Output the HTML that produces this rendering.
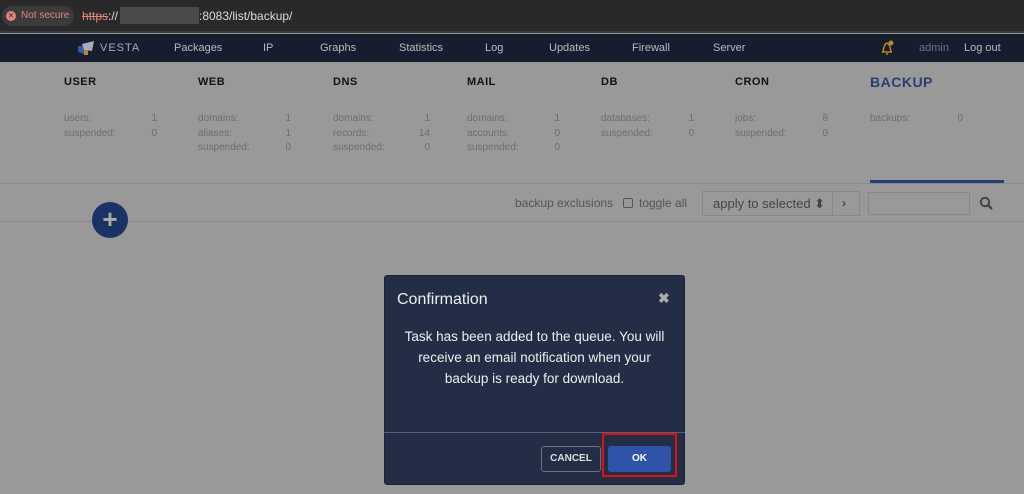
<!DOCTYPE html>
<html><head><style>
*{margin:0;padding:0;box-sizing:border-box}
body{width:1024px;height:494px;background:#999;font-family:"Liberation Sans",sans-serif;position:relative;overflow:hidden}
.abs{position:absolute;white-space:nowrap}
#chrome{left:0;top:0;width:1024px;height:33px;background:#292929;border-bottom:2px solid #3a3a3a}
#nav{left:0;top:34px;width:1024px;height:28px;background:#161d2c}
.nv{font-size:11px;color:#b8bcc4;top:42px;line-height:13px}
.h{font-size:11px;font-weight:bold;color:#111;top:76px;letter-spacing:.5px;line-height:13px}
.s{font-size:10px;color:#6e6e6e;line-height:14.5px}
.n{font-size:10px;color:#6e6e6e;line-height:14.5px;text-align:right}
</style></head><body>
<div id="chrome" class="abs"></div>
<div class="abs" style="left:2px;top:6px;width:72px;height:20px;border-radius:10px;background:#3b3b3b"></div>
<div class="abs" style="left:6px;top:11px;width:10px;height:10px;border-radius:5px;background:#e0857a;color:#3b3b3b;font-size:8px;line-height:10px;text-align:center;font-weight:bold">×</div>
<div class="abs" style="left:21px;top:10px;font-size:10px;line-height:12px;color:#e0857a">Not secure</div>
<div class="abs" style="left:82px;top:9px;font-size:12px;line-height:14px;color:#ddd"><span style="color:#e0857a;text-decoration:line-through">https</span>://</div>
<div class="abs" style="left:120px;top:7px;width:79px;height:17px;background:#4a4a4a"></div>
<div class="abs" style="left:199px;top:9px;font-size:12px;line-height:14px;color:#ddd">:8083/list/backup/</div>
<div id="nav" class="abs"></div>
<svg class="abs" style="left:76px;top:40px" width="20" height="16"><polygon points="2,6 8,6 8,14 2,12" fill="#2f5aa8"/><polygon points="6,4 18,1 16,11 8,10" fill="#aab"/><rect x="8" y="10" width="4" height="5" fill="#b8862b"/></svg>
<div class="abs nv" style="left:100px;letter-spacing:1px;color:#aab">VESTA</div>
<div class="abs nv" style="left:174px">Packages</div>
<div class="abs nv" style="left:263px">IP</div>
<div class="abs nv" style="left:320px">Graphs</div>
<div class="abs nv" style="left:399px">Statistics</div>
<div class="abs nv" style="left:485px">Log</div>
<div class="abs nv" style="left:549px">Updates</div>
<div class="abs nv" style="left:632px">Firewall</div>
<div class="abs nv" style="left:713px">Server</div>
<svg class="abs" style="left:879px;top:39px" width="16" height="18"><path d="M4 13 Q5 5 8 4 Q11 5 12 13 Z M3 13 H13 M7 15 H9" stroke="#b8862b" stroke-width="1.5" fill="none"/><circle cx="12" cy="4" r="2.5" fill="#b8862b"/></svg>
<div class="abs nv" style="left:919px;color:#6b7180">admin</div>
<div class="abs nv" style="left:964px">Log out</div>

<div class="abs h" style="left:64px">USER</div>
<div class="abs h" style="left:198px">WEB</div>
<div class="abs h" style="left:333px">DNS</div>
<div class="abs h" style="left:467px">MAIL</div>
<div class="abs h" style="left:601px">DB</div>
<div class="abs h" style="left:735px">CRON</div>
<div class="abs" style="left:870px;top:74px;font-size:14px;line-height:16px;font-weight:bold;color:#283f76;letter-spacing:.5px">BACKUP</div>

<div class="abs s" style="left:64px;top:112px">users:<br>suspended:</div><div class="abs n" style="left:140px;top:112px;width:17px">1<br>0</div>
<div class="abs s" style="left:198px;top:112px">domains:<br>aliases:<br>suspended:</div><div class="abs n" style="left:274px;top:112px;width:17px">1<br>1<br>0</div>
<div class="abs s" style="left:333px;top:112px">domains:<br>records:<br>suspended:</div><div class="abs n" style="left:409px;top:112px;width:21px">1<br>14<br>0</div>
<div class="abs s" style="left:467px;top:112px">domains:<br>accounts:<br>suspended:</div><div class="abs n" style="left:543px;top:112px;width:17px">1<br>0<br>0</div>
<div class="abs s" style="left:601px;top:112px">databases:<br>suspended:</div><div class="abs n" style="left:677px;top:112px;width:17px">1<br>0</div>
<div class="abs s" style="left:735px;top:112px">jobs:<br>suspended:</div><div class="abs n" style="left:811px;top:112px;width:17px">8<br>0</div>
<div class="abs s" style="left:870px;top:112px">backups:</div><div class="abs n" style="left:946px;top:112px;width:17px">0</div>

<div class="abs" style="left:0;top:183px;width:1024px;height:1px;background:#8a8a8a"></div>
<div class="abs" style="left:870px;top:180px;width:134px;height:3px;background:#283f76"></div>
<div class="abs" style="left:0;top:221px;width:1024px;height:1px;background:#8a8a8a"></div>
<div class="abs" style="left:92px;top:202px;width:36px;height:36px;border-radius:18px;background:#1a3266;color:#aaa;font-size:26px;line-height:34px;text-align:center;font-weight:bold">+</div>
<div class="abs" style="left:515px;top:196px;font-size:12px;line-height:14px;color:#555">backup exclusions</div>
<div class="abs" style="left:623px;top:198px;width:10px;height:10px;border:1px solid #555;border-radius:2px"></div>
<div class="abs" style="left:639px;top:196px;font-size:12px;line-height:14px;color:#555">toggle all</div>
<div class="abs" style="left:702px;top:191px;width:158px;height:25px;border:1px solid #888"></div>
<div class="abs" style="left:832px;top:191px;width:1px;height:25px;background:#888"></div>
<div class="abs" style="left:713px;top:196px;font-size:13px;line-height:15px;color:#444">apply to selected ⬍</div>
<div class="abs" style="left:842px;top:196px;font-size:12px;line-height:14px;color:#444;font-weight:bold">›</div>
<div class="abs" style="left:868px;top:192px;width:102px;height:23px;border:1px solid #888"></div>
<svg class="abs" style="left:979px;top:196px" width="14" height="14"><circle cx="6" cy="6" r="4.2" stroke="#444" stroke-width="2" fill="none"/><path d="M9 9 L13 13" stroke="#444" stroke-width="2.4"/></svg>

<div class="abs" style="left:384px;top:275px;width:301px;height:210px;background:#232e46;border-radius:3px;border:1px solid #1a2235"></div>
<div class="abs" style="left:397px;top:291px;font-size:16px;line-height:18px;color:#eee">Confirmation</div>
<div class="abs" style="left:658px;top:290px;font-size:14px;line-height:16px;color:#aaa;font-weight:bold">✖</div>
<div class="abs" style="left:384px;top:326px;width:301px;text-align:center;font-size:13.5px;line-height:21px;color:#eee">Task has been added to the queue. You will<br>receive an email notification when your<br>backup is ready for download.</div>
<div class="abs" style="left:384px;top:432px;width:301px;height:1px;background:#55607a"></div>
<div class="abs" style="left:541px;top:446px;width:60px;height:26px;border:1px solid #6a7080;border-radius:3px;color:#ddd;font-size:10px;font-weight:bold;text-align:center;line-height:24px">CANCEL</div>
<div class="abs" style="left:602px;top:433px;width:75px;height:44px;border:2px solid #e01010"></div>
<div class="abs" style="left:608px;top:446px;width:63px;height:26px;background:#2f53a8;border-radius:3px;color:#fff;font-size:10px;font-weight:bold;text-align:center;line-height:26px">OK</div>
</body></html>
